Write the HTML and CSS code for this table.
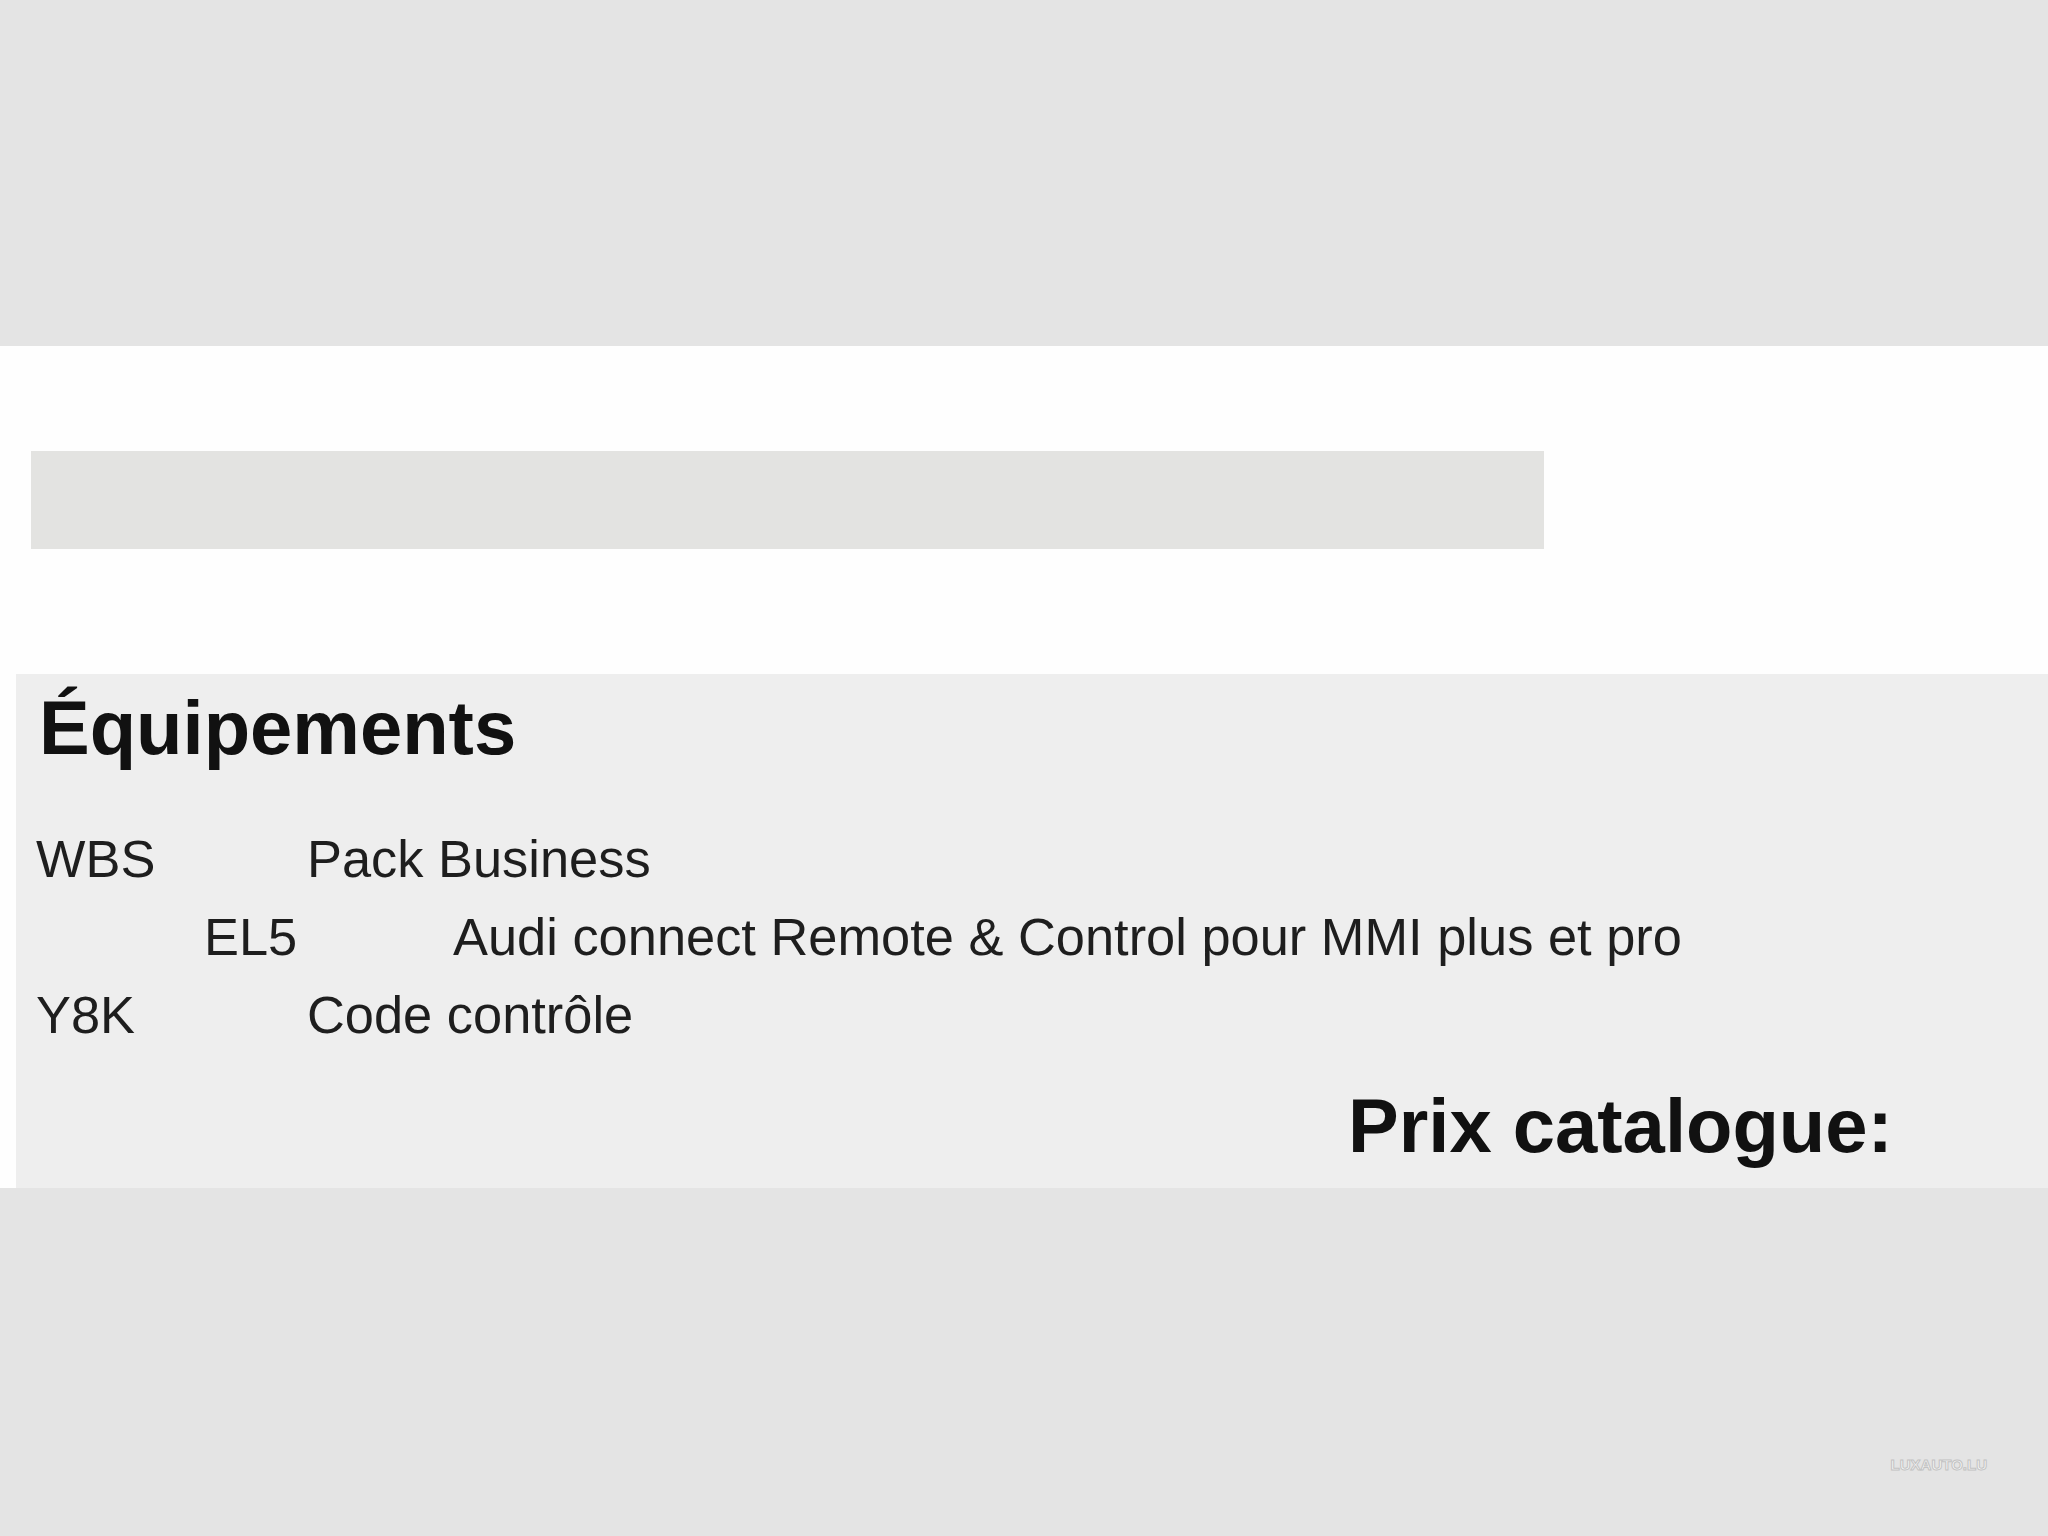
FILE: index.html
```html
<!DOCTYPE html>
<html lang="fr">

<head>
    <meta charset="utf-8">
    <meta name="viewport" content="width=device-width, initial-scale=1.0">
    <title>Équipements</title>
    <link rel="stylesheet" href="styles.css">
</head>

<body>

    <div class="haut"></div>

    <div class="feuille">
        <div class="entete">
            <div class="barre"></div>
        </div>

        <section class="panneau">
            <h2 class="titre">Équipements</h2>
            <div class="lignes">
                <div class="ligne">
                    <span class="code">WBS</span>
                    <span class="texte">Pack Business</span>
                </div>
                <div class="ligne sous">
                    <span class="code">EL5</span>
                    <span class="texte">Audi connect Remote &amp; Control pour MMI plus et pro</span>
                </div>
                <div class="ligne">
                    <span class="code">Y8K</span>
                    <span class="texte">Code contrôle</span>
                </div>
            </div>
            <p class="prix">Prix catalogue:</p>
        </section>
    </div>

    <footer class="bas">
        <span class="marque">LUXAUTO.LU</span>
    </footer>

</body>

</html>
```

FILE: styles.css
```css
        body {
            margin: 0;
            padding: 0;
            background-color: #e4e4e4;
            font-family: "Liberation Sans", Arial, sans-serif;
            color: #161616;
        }

        .haut {
            height: 346px;
        }

        .feuille {
            background-color: #fefefe;
        }

        .entete {
            height: 328px;
            padding-top: 105px;
            box-sizing: border-box;
        }

        .barre {
            margin-left: 31px;
            width: 1513px;
            height: 98px;
            background-color: #e3e3e1;
        }

        .panneau {
            margin-left: 16px;
            height: 514px;
            padding: 10px 0 0 20px;
            box-sizing: border-box;
            background-color: #eeeeee;
        }

        .titre {
            margin: 0;
            padding: 6px 0 0 3px;
            font-size: 76px;
            line-height: 76px;
            font-weight: bold;
            color: #111;
        }

        .lignes {
            margin-top: 54px;
        }

        .ligne {
            display: flex;
            height: 78px;
            line-height: 78px;
            font-size: 52.4px;
            color: #1e1e1e;
        }

        .code {
            width: 271px;
        }

        .sous {
            padding-left: 168px;
        }

        .sous .code {
            width: 249px;
        }

        .prix {
            margin: 34px 0 0 1312px;
            font-size: 76px;
            line-height: 76px;
            font-weight: bold;
            color: #111;
        }

        .bas {
            height: 348px;
            display: flex;
            justify-content: flex-end;
            padding: 268px 61px 0 0;
            box-sizing: border-box;
        }

        .marque {
            font-size: 15px;
            line-height: 18px;
            font-weight: bold;
            color: #f6f6f6;
            -webkit-text-stroke: 1px #c2c2c2;
        }
```
